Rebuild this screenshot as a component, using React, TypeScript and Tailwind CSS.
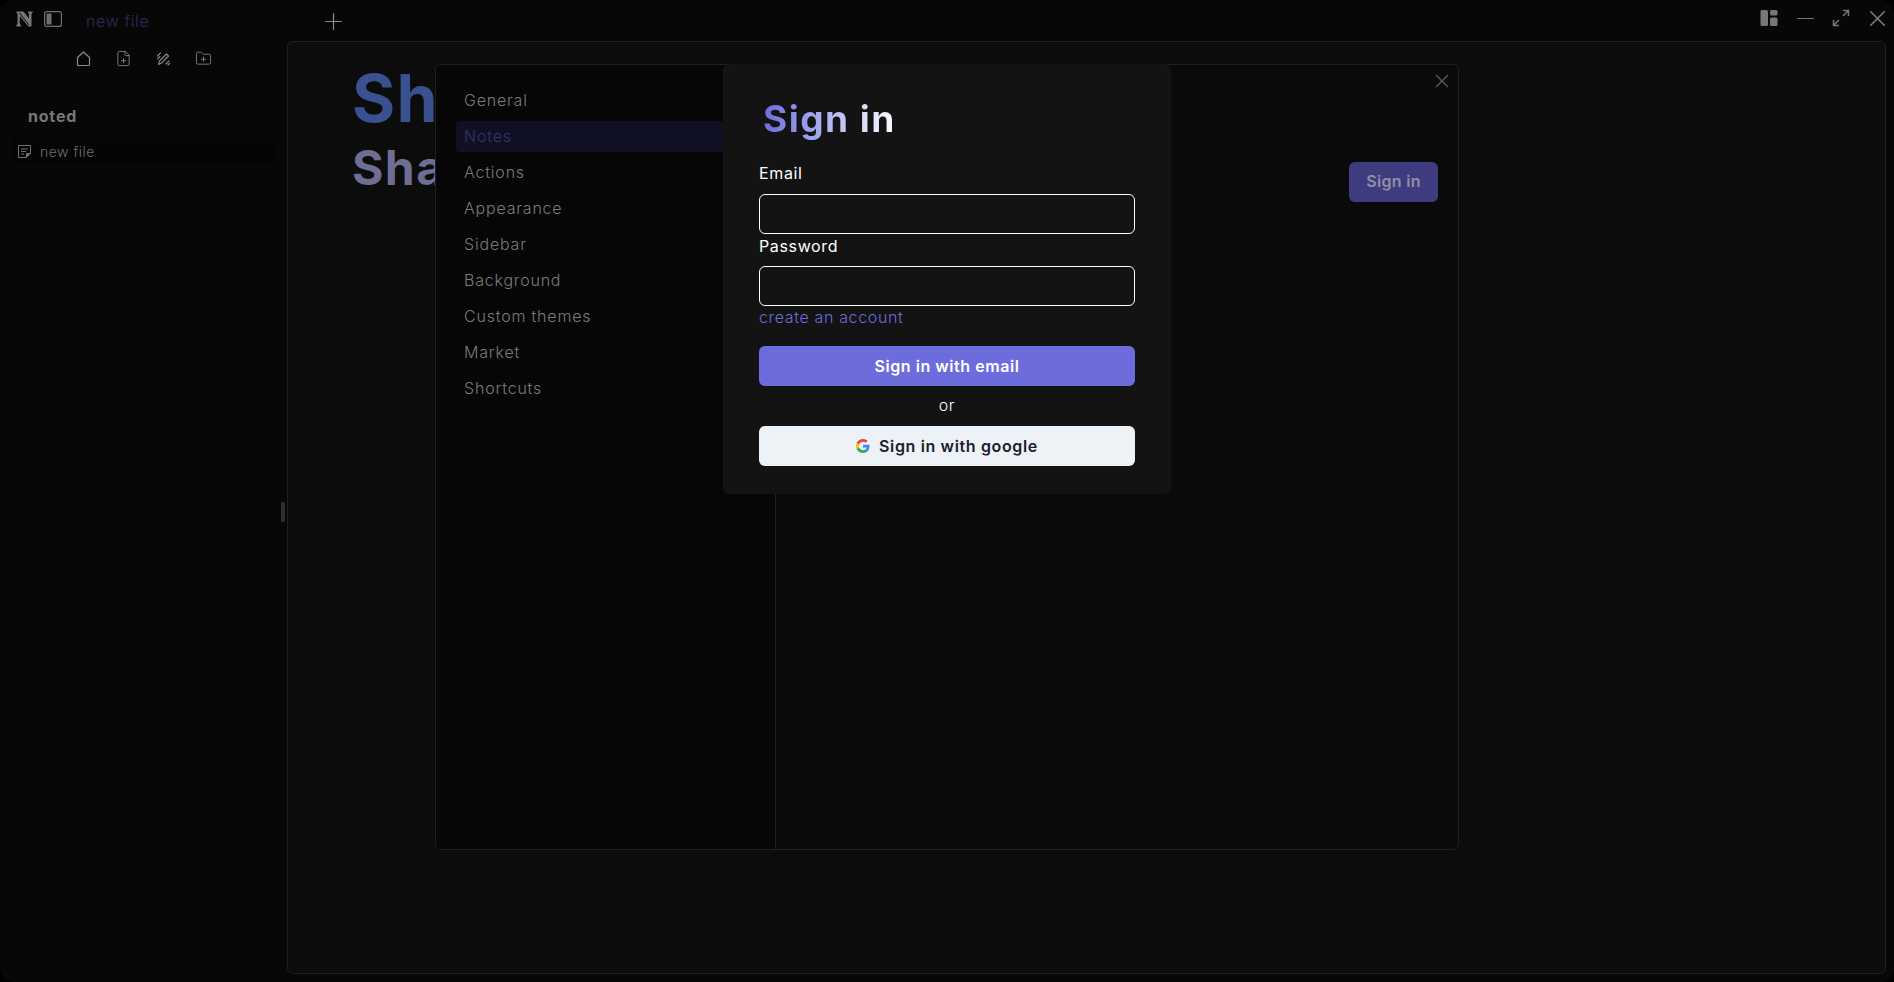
import { FilePlus, FolderPlus, X, Plus, Minus } from "lucide-react";

const nav = ["General", "Notes", "Actions", "Appearance", "Sidebar", "Background", "Custom themes", "Market", "Shortcuts"];

function Logo() {
  return (
    <svg width="17" height="16" viewBox="0 0 17 16" fill="none">
      <path d="M0.500 0.500H7.500L13 7.500V2.800L12 2V0.500H16.500V2L15.500 2.800V15.500H12.500L3.800 5V13L5 14V15.500H0.500V14L1.500 13V2.800L0.500 2Z" fill="#767676" />
      <path d="M3.500 2 12.800 13.800" stroke="#0b0b0b" strokeWidth="1" />
    </svg>
  );
}

function PanelIcon() {
  return (
    <svg width="18" height="16" viewBox="0 0 18 16" fill="none">
      <rect x="0.600" y="0.600" width="16.800" height="14.800" rx="2" stroke="#6f6f6f" strokeWidth="1.200" />
      <rect x="2.500" y="2.500" width="5" height="11" fill="#6f6f6f" />
    </svg>
  );
}

function HomeIcon() {
  return (
    <svg width="17" height="17" viewBox="0 0 17 17" fill="none" stroke="#8a8a8a" strokeWidth="1.200" strokeLinejoin="round">
      <path d="M2.500 7.500 8.500 2l6 5.500V14.500a1 1 0 0 1-1 1h-10a1 1 0 0 1-1-1z" />
    </svg>
  );
}

function PencilHatch() {
  return (
    <svg width="17" height="14" viewBox="0 0 17 14" fill="none" stroke="#8a8a8a" strokeWidth="1.100" strokeLinecap="round" strokeLinejoin="round">
      <path d="M3.500 12.500 4.500 9l7-7 2 2-7 7z" />
      <path d="M2.500 4l3-3M2.500 7 5 4.500M11 12l3-3M13 13l1.500-1.500" />
    </svg>
  );
}

function NoteIcon() {
  return (
    <svg width="13" height="13" viewBox="0 0 13 13" fill="none" stroke="#707070" strokeWidth="1">
      <path d="M0.500 0.500H12.500V8L8.500 12.500H0.500Z" />
      <path d="M3 4H10M3 6.500H8M3 9H6" />
      <path d="M8.500 12.500V8.500H12.500" fill="#707070" />
    </svg>
  );
}

function LayoutIcon() {
  return (
    <svg width="18" height="18" viewBox="0 0 18 18" fill="#777">
      <rect x="0.500" y="1" width="7.500" height="16" rx="1.500" />
      <rect x="10" y="1" width="7.500" height="5.500" rx="1.500" />
      <rect x="10" y="8.500" width="7.500" height="8.500" rx="1.500" />
    </svg>
  );
}

function ExpandIcon() {
  return (
    <svg width="18" height="18" viewBox="0 0 18 18" fill="none" stroke="#777" strokeWidth="1.500">
      <path d="M11 1.500h5.500V7M16.500 1.500l-5.500 5.500M7 16.500H1.500V11M1.500 16.500l5.500-5.500" />
    </svg>
  );
}

function GoogleG() {
  return (
    <svg width="14" height="14" viewBox="0 0 48 48">
      <path fill="#EA4335" d="M24 9.500c3.500 0 6.700 1.300 9.100 3.500l6.800-6.800C35.800 2.400 30.200 0 24 0 14.600 0 6.500 5.400 2.600 13.200l7.900 6.200C12.400 13.700 17.700 9.500 24 9.500z" />
      <path fill="#4285F4" d="M46.500 24.500c0-1.600-.2-3.100-.4-4.500H24v9h12.700c-.6 2.900-2.200 5.400-4.700 7.100l7.600 5.900c4.400-4.100 6.900-10.100 6.900-17.500z" />
      <path fill="#FBBC05" d="M10.500 28.600c-.5-1.400-.8-3-.8-4.600s.3-3.200.8-4.600l-7.900-6.200C.9 16.500 0 20.100 0 24s.9 7.500 2.600 10.800z" />
      <path fill="#34A853" d="M24 48c6.500 0 11.900-2.100 15.900-5.800L32.300 36.300c-2.100 1.400-4.900 2.200-8.300 2.200-6.300 0-11.600-4.200-13.500-9.900l-7.900 6.200C6.500 42.600 14.600 48 24 48z" />
    </svg>
  );
}

export default function App() {
  return (
    <div className="relative h-[982px] w-full overflow-hidden bg-black font-['Inter','Liberation_Sans',sans-serif]">
      <div className="flex h-full flex-col rounded-[14px] bg-[#070707]">
        <header className="flex h-[41px] shrink-0 items-center">
          <div className="ml-[16px] mb-[3px]"><Logo /></div>
          <div className="ml-[11px] mb-[3px]"><PanelIcon /></div>
          <span className="ml-[24px] text-[16px] font-light tracking-[0.04em] text-[#2f2b58]">new file</span>
          <Plus size={27} strokeWidth={1.100} className="ml-[171px] mt-[1px] text-[#8a8a8a]" />
          <div className="ml-auto mb-[5px] flex items-center gap-[2px]">
            <div className="flex w-[34px] justify-center"><LayoutIcon /></div>
            <div className="flex w-[34px] justify-center"><Minus size={27} strokeWidth={1.100} className="text-[#777]" /></div>
            <div className="flex w-[34px] justify-center"><ExpandIcon /></div>
            <div className="flex w-[34px] justify-center"><X size={27} strokeWidth={1.200} className="text-[#888]" /></div>
          </div>
        </header>
        <div className="flex min-h-0 flex-1 pb-[8px] pr-[8px]">
          <aside className="relative flex w-[287px] shrink-0 flex-col">
            <div className="mt-[9px] ml-[75px] flex items-center gap-[23px] text-[#8a8a8a]">
              <HomeIcon />
              <FilePlus size={17} strokeWidth={1.200} />
              <PencilHatch />
              <FolderPlus size={17} strokeWidth={1.200} />
            </div>
            <div className="ml-[28px] mt-[37px] text-[16px] font-bold tracking-[0.05em] text-[#777]">noted</div>
            <div className="mx-[12px] mt-[10px] flex h-[26px] items-center gap-[9px] rounded-[4px] bg-[#050505] px-[6px]">
              <NoteIcon />
              <span className="text-[14px] font-light tracking-[0.035em] text-[#6e6e6e]">new file</span>
            </div>
            <div className="absolute right-[2px] top-[461px] h-[20px] w-[4px] rounded-[1px] bg-[#2e2e2e]" />
          </aside>
          <main className="flex-1 rounded-[6px] border border-[#1f1f1f] bg-[#0c0c0c] pl-[64px] pt-[20px]">
            <div className="text-[66px] font-bold leading-[72px] tracking-[0.02em] text-[#3a5190]">Sh</div>
            <div className="mt-[1px] text-[48px] font-bold leading-[66px] tracking-[0.03em] text-[#6e6e92]">Sha</div>
          </main>
        </div>
      </div>

      {/* Settings dialog */}
      <div className="absolute left-[435px] top-[64px] flex h-[786px] w-[1024px] overflow-hidden rounded-[6px] border border-[#1f1f1f] bg-[#0a0a0a]">
        <nav className="flex w-[340px] shrink-0 flex-col gap-[5px] border-r border-[#1f1f1f] bg-[#060606] px-[20px] pt-[20px]">
          {nav.map((n) => (
            <div
              key={n}
              className={`flex h-[31px] items-center rounded-[4px] px-[8px] pb-[2px] text-[16px] font-light tracking-[0.05em] ${n === "Notes" ? "bg-[#101024] text-[#37336a]" : "text-[#7b7b7b]"}`}
            >
              {n}
            </div>
          ))}
        </nav>
        <section className="relative flex-1">
          <X size={22} strokeWidth={1.500} className="absolute right-[5px] top-[5px] text-[#5a5a5a]" />
          <button className="absolute right-[20px] top-[97px] h-[40px] w-[89px] rounded-[6px] bg-[#3f3b7f] pb-[2px] text-[16px] font-semibold tracking-[0.02em] text-[#908fa6]">
            Sign in
          </button>
        </section>
      </div>

      {/* Sign-in dialog */}
      <div className="absolute left-[723px] top-[64px] flex h-[430px] w-[448px] flex-col rounded-[6px] bg-[#131313] px-[36px] pt-[27px] text-white">
        <h1 className="ml-[4px] h-[56px] w-fit bg-gradient-to-r from-[#6c6cdc] to-white bg-clip-text text-[37px] font-bold leading-[56px] tracking-[0.04em] text-transparent">
          Sign in
        </h1>
        <label className="mt-[14px] text-[16px] leading-[24px] tracking-[0.04em]">Email</label>
        <div className="mt-[9px] h-[40px] rounded-[6px] border border-white" />
        <label className="text-[16px] leading-[24px] tracking-[0.04em]">Password</label>
        <div className="mt-[8px] h-[40px] rounded-[6px] border border-white" />
        <a className="text-[16px] font-light leading-[22px] tracking-[0.04em] text-[#6c6cdc]">create an account</a>
        <button className="mt-[18px] h-[40px] rounded-[6px] bg-[#6c6cdc] pb-[1px] text-[16px] font-semibold tracking-[0.035em]">Sign in with email</button>
        <div className="mt-[7px] h-[26px] text-center text-[16px] font-light leading-[24px] tracking-[0.04em]">or</div>
        <button className="mt-[7px] flex h-[40px] items-center justify-center gap-[9px] rounded-[6px] bg-[#edf2f7] pb-[1px] text-[16px] font-semibold tracking-[0.04em] text-[#1a202c]">
          <GoogleG />
          Sign in with google
        </button>
      </div>
    </div>
  );
}
